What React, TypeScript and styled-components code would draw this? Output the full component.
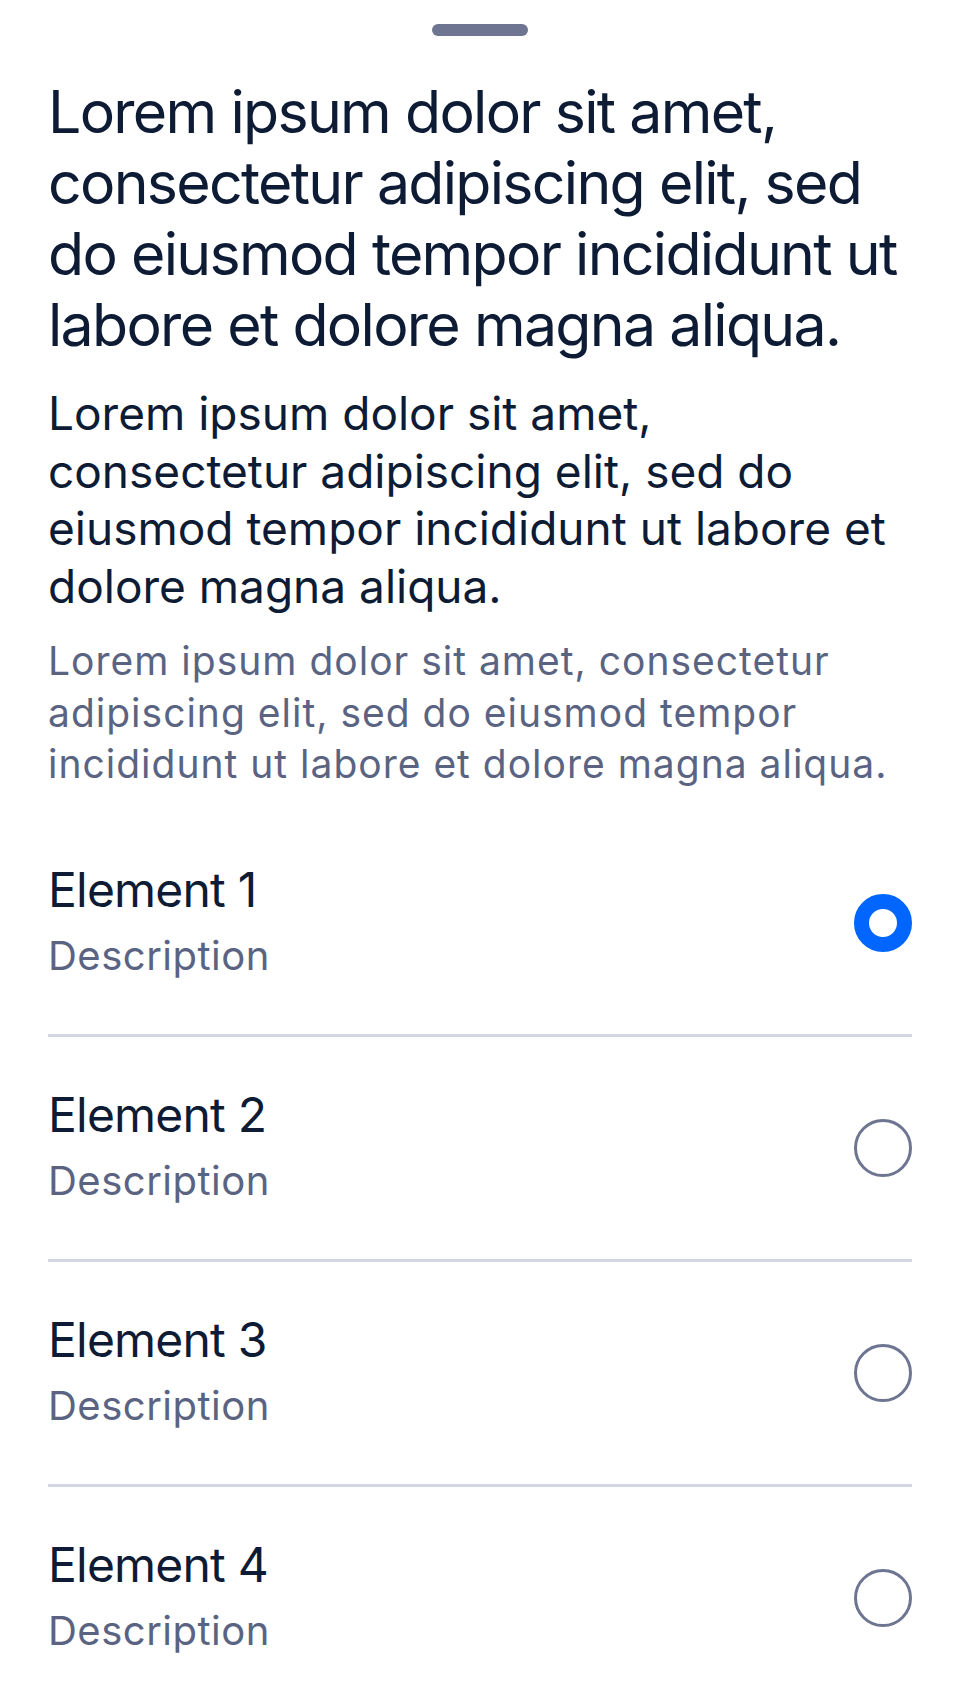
import styled, { createGlobalStyle } from "styled-components";
import { useState } from "react";

const GlobalStyle = createGlobalStyle`
  html, body {
    margin: 0;
    padding: 0;
    background: #ffffff;
  }
  body {
    font-family: Inter, "Noto Sans", sans-serif;
    -webkit-font-smoothing: antialiased;
  }
`;

const Sheet = styled.div`
  width: 960px;
  min-height: 1704px;
  box-sizing: border-box;
  padding: 0 48px;
  background: #ffffff;
  display: flex;
  flex-direction: column;
`;

const HandleWrap = styled.div`
  display: flex;
  justify-content: center;
  padding: 24px 0 40px;
`;

const Handle = styled.div`
  width: 96px;
  height: 12px;
  border-radius: 6px;
  background: #6e7591;
`;

const Title = styled.h1`
  margin: 0;
  font-size: 59px;
  line-height: 71px;
  font-weight: 400;
  letter-spacing: -1.7px;
  color: #0d1b35;
`;

const Lead = styled.p`
  margin: 25px 0 0;
  font-size: 46px;
  line-height: 57.5px;
  font-weight: 400;
  letter-spacing: 0;
  color: #0d1b35;
`;

const Body = styled.p`
  margin: 20px 0 0;
  font-size: 39px;
  line-height: 51.5px;
  font-weight: 400;
  letter-spacing: 1px;
  color: #5a6482;
`;

const List = styled.ul`
  list-style: none;
  margin: 22px 0 0;
  padding: 0;
`;

const Row = styled.li<{ $last?: boolean }>`
  display: flex;
  align-items: center;
  justify-content: space-between;
  padding: 48px 0;
  border-bottom: ${(p) => (p.$last ? "none" : "3px solid #d3d6e3")};
  cursor: pointer;
`;

const Texts = styled.div`
  display: flex;
  flex-direction: column;
  gap: 6px;
`;

const Name = styled.span`
  font-size: 48px;
  line-height: 60px;
  letter-spacing: -0.8px;
  color: #0d1b35;
`;

const Desc = styled.span`
  font-size: 40px;
  line-height: 60px;
  letter-spacing: 0.5px;
  color: #5a6482;
`;

const Radio = styled.span<{ $checked: boolean }>`
  width: 58px;
  height: 58px;
  box-sizing: border-box;
  border-radius: 50%;
  flex-shrink: 0;
  border: ${(p) => (p.$checked ? "15px solid #0066ff" : "3px solid #6e7591")};
  background: #ffffff;
`;

const items = [
  { id: 1, name: "Element 1", desc: "Description" },
  { id: 2, name: "Element 2", desc: "Description" },
  { id: 3, name: "Element 3", desc: "Description" },
  { id: 4, name: "Element 4", desc: "Description" },
];

const text =
  "Lorem ipsum dolor sit amet, consectetur adipiscing elit, sed do eiusmod tempor incididunt ut labore et dolore magna aliqua.";

const App = () => {
  const [selected, setSelected] = useState(1);

  return (
    <>
      <GlobalStyle />
      <Sheet>
        <HandleWrap>
          <Handle />
        </HandleWrap>
        <Title>{text}</Title>
        <Lead>{text}</Lead>
        <Body>{text}</Body>
        <List>
          {items.map((item, i) => (
            <Row
              key={item.id}
              $last={i === items.length - 1}
              onClick={() => setSelected(item.id)}
            >
              <Texts>
                <Name>{item.name}</Name>
                <Desc>{item.desc}</Desc>
              </Texts>
              <Radio $checked={selected === item.id} />
            </Row>
          ))}
        </List>
      </Sheet>
    </>
  );
};

export default App;
